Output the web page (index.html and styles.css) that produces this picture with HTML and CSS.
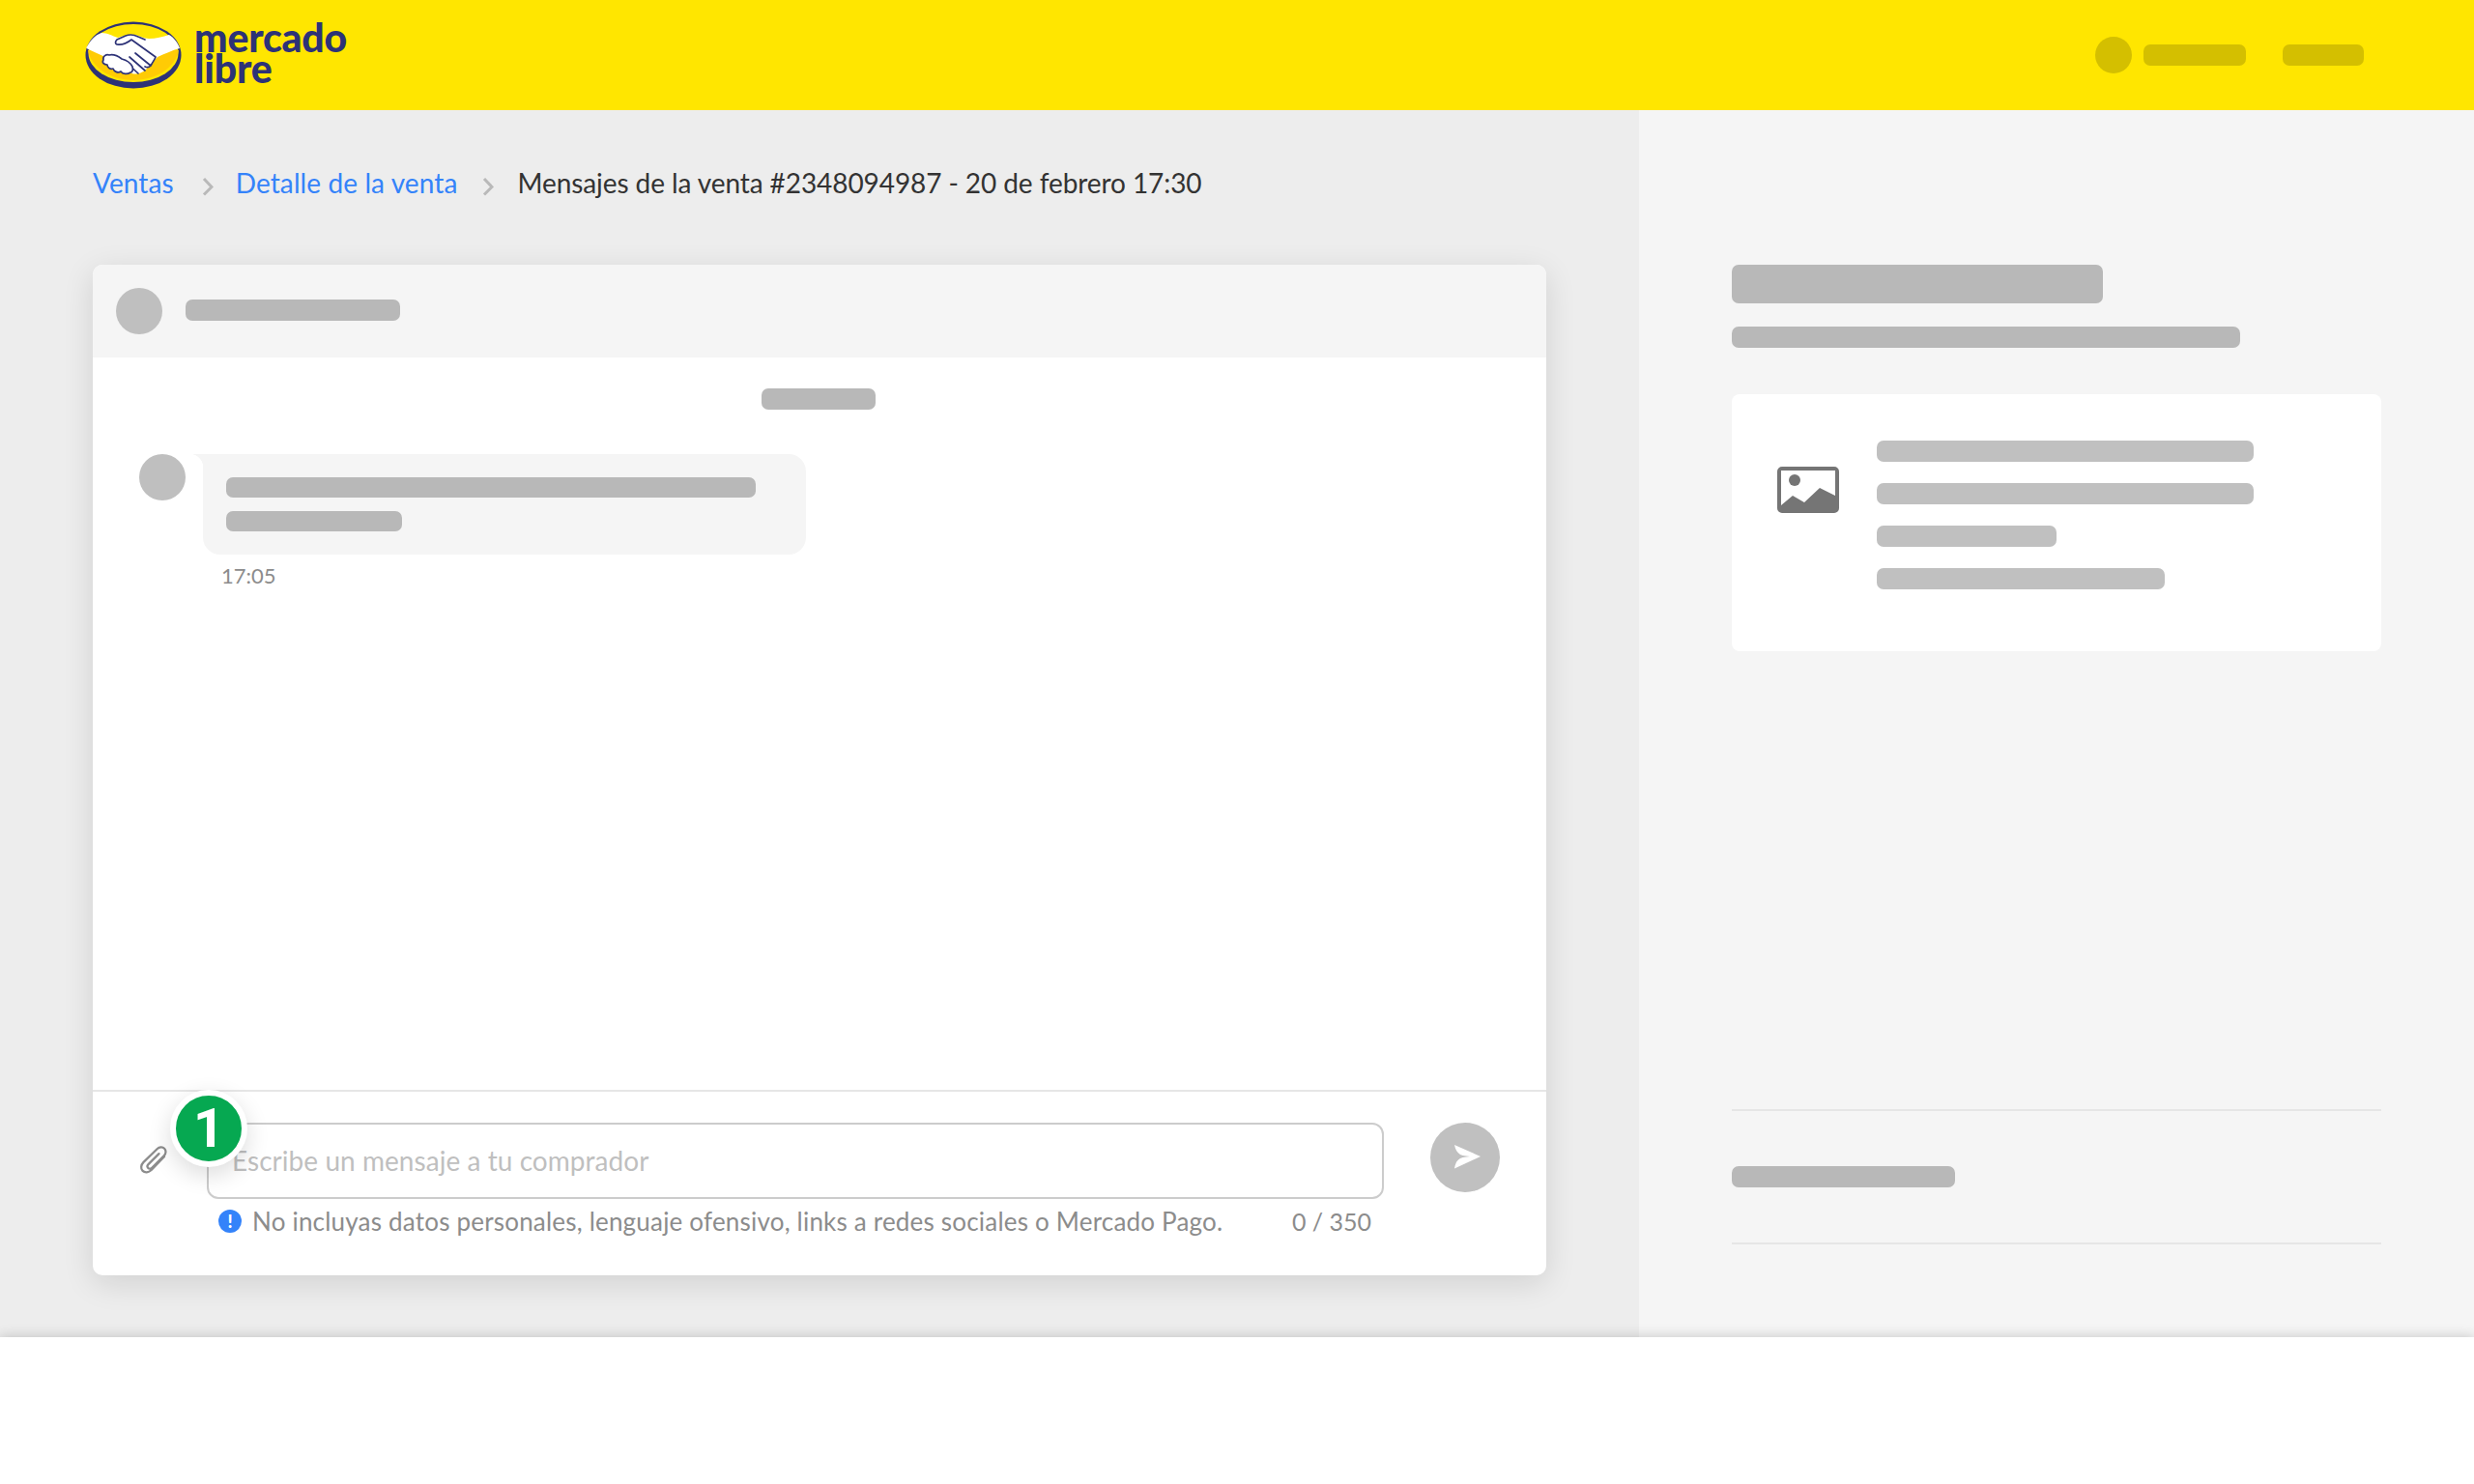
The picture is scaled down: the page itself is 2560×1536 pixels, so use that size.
FILE: index.html
```html
<!DOCTYPE html>
<html lang="es">
<head>
<meta charset="UTF-8">
<meta name="viewport" content="width=device-width, initial-scale=1.0">
<title>Mensajes de la venta</title>
<link rel="stylesheet" href="styles.css">
</head>
<body>
    <header class="topbar">
        <a class="logo">
            <svg class="logo-mark" viewBox="0 0 100 70" width="100" height="70">
                <ellipse cx="50" cy="35" rx="49.5" ry="34.500" fill="#2d3277"/>
                <ellipse cx="50" cy="33" rx="46.500" ry="30" fill="#ffe600"/>
                <path d="M3 30C6 47 26 61 50 61s44-14 47-31L60 24H30z" fill="#ffcb05"/>
                <path d="M1.500 27C6 19 11 14 17 12c6 0 11 3 17 5 6-2 12-4 17-3 6 1 10 4 15 4 7 0 15-2 21-4 5 3 9 8 11 14-8 2-16 6-23 9L62 51c-4 3-11 5-15 2-8-4-17-11-24-15-7-3-15-7-21.500-10z" fill="#fff"/>
                <path d="M33 19l9-4c5-2 9-1 13 1l7 3M33 19c-2 2-2 4 0 5 6 1 10-1 15-5l25 18M68 46L52 33M62 51L46 37M55 54L42 42M73 37c-1 3-3 5-5 9-2 2-4 2-6 1" fill="none" stroke="#2d3277" stroke-width="1.700" stroke-linecap="round" stroke-linejoin="round"/>
                <path d="M25 35c-3-1-7 1-6 5-2 3 1 5 4 5 0 3 3 5 6 4 1 3 5 5 8 3 2 3 7 3 10 1 2 0 3-3 2-6-2-4-7-7-11-8-4-3-9-5-13-4z" fill="#fff" stroke="#2d3277" stroke-width="1.700" stroke-linejoin="round"/>
            </svg>
            <span class="logo-text">mercado libre</span>
        </a>
        <div class="topbar-user">
            <span class="sk-dot"></span>
            <span class="sk-nav sk-nav-name"></span>
            <span class="sk-nav sk-nav-short"></span>
        </div>
    </header>

    <main class="layout">
        <section class="col-main">
            <nav class="breadcrumb">
                <a class="crumb-link crumb-first">Ventas</a>
                <svg class="crumb-sep" viewBox="0 0 12 20" width="12" height="20"><path d="M2 2l8 8.500-8 8" fill="none" stroke="#b9b9b9" stroke-width="3"/></svg>
                <a class="crumb-link crumb-second">Detalle de la venta</a>
                <svg class="crumb-sep" viewBox="0 0 12 20" width="12" height="20"><path d="M2 2l8 8.500-8 8" fill="none" stroke="#b9b9b9" stroke-width="3"/></svg>
                <span class="crumb-current">Mensajes de la venta #2348094987 - 20 de febrero 17:30</span>
            </nav>

            <div class="chat">
                <div class="chat-head">
                    <span class="sk-avatar"></span>
                    <span class="sk-bar sk-head-name"></span>
                </div>
                <div class="chat-body">
                    <span class="sk-bar sk-date"></span>
                    <div class="message">
                        <span class="sk-avatar"></span>
                        <div class="bubble">
                            <span class="sk-bar sk-line-long"></span>
                            <span class="sk-bar sk-line-short"></span>
                        </div>
                    </div>
                    <div class="message-time">17:05</div>
                </div>
                <div class="composer">
                    <span class="step-badge">1</span>
                    <div class="composer-row">
                        <svg class="clip-icon" viewBox="0 0 32 32" width="36" height="36">
                            <path d="M25 11.500L13 24c-2.500 2.500-6 2.800-8 .8s-1.700-5.500.8-8L18.500 4.500c1.800-1.800 4.800-2 6.500-.3s1.600 4.600-.2 6.400L13.500 22c-1 1-2.600 1.100-3.500.2s-.8-2.400.2-3.400L20 9" fill="none" stroke="#8c8c8c" stroke-width="2" stroke-linecap="round"/>
                        </svg>
                        <div class="input-box">Escribe un mensaje a tu comprador</div>
                        <button class="send-btn">
                            <svg viewBox="0 0 72 72" width="72" height="72"><path d="M25 23l27 12-27 12.500c1-5 2-8 6-10.500 3-1.500 8-2 15-2-7 0-12-.5-15-2-3-2-5-5-6-10z" fill="#fff"/></svg>
                        </button>
                    </div>
                    <div class="composer-note">
                        <span class="info-icon">!</span>
                        <span class="note-text">No incluyas datos personales, lenguaje ofensivo, links a redes sociales o Mercado Pago.</span>
                        <span class="note-count">0 / 350</span>
                    </div>
                </div>
            </div>
        </section>

        <aside class="col-side">
            <span class="sk-bar sk-title"></span>
            <span class="sk-bar sk-subtitle"></span>
            <div class="product">
                <svg class="image-icon" viewBox="0 0 64 48" width="64" height="48">
                    <path fill-rule="evenodd" d="M5 0h54a5 5 0 0 1 5 5v38a5 5 0 0 1-5 5H5a5 5 0 0 1-5-5V5a5 5 0 0 1 5-5zM4 4v36l12-10 12 7 16-15 16 8V4z" fill="#757575"/>
                    <circle cx="18" cy="14" r="6" fill="#757575"/>
                </svg>
                <div class="product-lines">
                    <span class="sk-bar sk-light sk-p1"></span>
                    <span class="sk-bar sk-light sk-p1"></span>
                    <span class="sk-bar sk-light sk-p2"></span>
                    <span class="sk-bar sk-light sk-p3"></span>
                </div>
            </div>
            <div class="side-row">
                <span class="sk-bar sk-side-row"></span>
            </div>
        </aside>
    </main>

    <footer class="bottom"></footer>
</body>
</html>
```

FILE: styles.css
```css
body {
    margin: 0;
    background-color: #fff;
    font-family: "Lato", "Liberation Sans", sans-serif;
}

/* top bar */
.topbar {
    display: flex;
    align-items: flex-start;
    height: 114px;
    padding: 0 114px 0 88px;
    background-color: #ffe600;
}
.logo {
    display: flex;
    margin-top: 22px;
}
.logo-mark {
    display: block;
}
.logo-text {
    display: block;
    width: min-content;
    margin: 1px 0 0 13px;
    font-family: "Lato", sans-serif;
    font-size: 41px;
    font-weight: 900;
    line-height: 32px;
    letter-spacing: -0.2px;
    color: #2d3277;
}
.topbar-user {
    display: flex;
    align-items: center;
    margin: 38px 0 0 auto;
}
.sk-dot {
    width: 38px;
    height: 38px;
    border-radius: 50%;
    background-color: #d4bf00;
}
.sk-nav {
    height: 22px;
    border-radius: 7px;
    background-color: #d4bf00;
}
.sk-nav-name {
    width: 106px;
    margin-left: 12px;
}
.sk-nav-short {
    width: 84px;
    margin-left: 38px;
}

/* page columns */
.layout {
    display: grid;
    grid-template-columns: 1696px 864px;
    height: 1270px;
}
.col-main {
    padding: 0 96px;
    background-color: #ededed;
}
.col-side {
    display: flex;
    flex-direction: column;
    padding: 160px 96px 0;
    background-color: #f5f5f5;
}
.bottom {
    position: relative;
    height: 152px;
    background-color: #fff;
    box-shadow: 0 -1px 12px rgba(0, 0, 0, 0.18);
}

/* breadcrumb */
.breadcrumb {
    display: flex;
    align-items: center;
    height: 40px;
    padding-top: 55px;
    font-size: 28px;
    color: #333;
}
.crumb-link {
    letter-spacing: 0.1px;
    color: #3483fa;
}
.crumb-current {
    letter-spacing: -0.08px;
}
.crumb-sep {
    flex: none;
    margin-top: 8px;
}
.crumb-first + .crumb-sep {
    margin-left: 29px;
    margin-right: 23px;
}
.crumb-second + .crumb-sep {
    margin-left: 26px;
    margin-right: 24px;
}

/* skeleton pieces */
.sk-avatar {
    flex: none;
    width: 48px;
    height: 48px;
    border-radius: 50%;
    background-color: #bfbfbf;
}
.sk-bar {
    display: block;
    height: 22px;
    border-radius: 7px;
    background-color: #b8b8b8;
}
.sk-light {
    background-color: #c0c0c0;
}

/* chat card */
.chat {
    display: flex;
    flex-direction: column;
    height: 1046px;
    margin-top: 65px;
    border-radius: 10px;
    background-color: #fff;
    box-shadow: 0 8px 32px rgba(0, 0, 0, 0.12);
}
.chat-head {
    display: flex;
    align-items: center;
    flex: none;
    height: 96px;
    padding-left: 24px;
    border-radius: 10px 10px 0 0;
    background-color: #f5f5f5;
}
.sk-head-name {
    width: 222px;
    margin: -2px 0 0 24px;
}
.chat-body {
    flex: 1;
}
.sk-date {
    width: 118px;
    margin: 32px auto 0;
    transform: translateX(-1px);
}
.message {
    display: flex;
    align-items: flex-start;
    margin-top: 46px;
    padding-left: 48px;
}
.bubble {
    position: relative;
    display: flex;
    flex-direction: column;
    gap: 14px;
    box-sizing: border-box;
    width: 624px;
    height: 104px;
    margin-left: 18px;
    padding: 24px;
    border-radius: 0 18px 18px 18px;
    background-color: #f5f5f5;
}
.bubble::before {
    content: "";
    position: absolute;
    top: 0;
    left: -14px;
    width: 14px;
    height: 14px;
    background: radial-gradient(circle at 0 100%, #fff 14px, #f5f5f5 14.5px);
}
.sk-line-long {
    width: 548px;
}
.sk-line-short {
    width: 182px;
}
.message-time {
    margin: 7px 0 0 133px;
    font-size: 22px;
    line-height: 30px;
    color: #8c8c8c;
}

/* composer */
.composer {
    position: relative;
    flex: none;
    height: 190px;
    border-top: 2px solid #e6e6e6;
}
.composer-row {
    display: flex;
    align-items: flex-start;
    padding: 32px 0 0 46px;
}
.clip-icon {
    flex: none;
    margin-top: 22px;
}
.input-box {
    flex: none;
    box-sizing: border-box;
    width: 1218px;
    height: 79px;
    margin-left: 36px;
    padding: 0 0 0 24px;
    border: 2px solid #ccc;
    border-radius: 12px;
    font-size: 28px;
    line-height: 75px;
    letter-spacing: 0.05px;
    color: #bfbfbf;
}
.send-btn {
    flex: none;
    width: 72px;
    height: 72px;
    margin-left: 48px;
    padding: 0;
    border: 0;
    border-radius: 50%;
    background-color: #c0c0c0;
}
.send-btn svg {
    display: block;
}
.composer-note {
    display: flex;
    align-items: center;
    height: 30px;
    margin: 8px 181px 0 130px;
    font-size: 26px;
    color: #8c8c8c;
}
.info-icon {
    flex: none;
    width: 24px;
    height: 24px;
    margin-right: 11px;
    border-radius: 50%;
    background-color: #3483fa;
    font-size: 18px;
    font-weight: 900;
    line-height: 24px;
    text-align: center;
    color: #fff;
}
.note-text {
    letter-spacing: 0.2px;
}
.note-count {
    margin-left: auto;
    font-size: 25px;
}
.step-badge {
    position: absolute;
    top: -2px;
    left: 80px;
    width: 68px;
    height: 68px;
    border: 6px solid #fff;
    border-radius: 50%;
    background-color: #06a851;
    box-shadow: 0 8px 24px rgba(0, 0, 0, 0.14);
    font-family: "Roboto", sans-serif;
    font-size: 56px;
    font-weight: 700;
    line-height: 68px;
    text-align: center;
    color: #fff;
    z-index: 1;
}

/* right column */
.sk-title {
    width: 384px;
    height: 40px;
}
.sk-subtitle {
    width: 526px;
    margin-top: 24px;
}
.product {
    display: flex;
    align-items: flex-start;
    box-sizing: border-box;
    height: 266px;
    margin-top: 48px;
    padding: 48px 0 0 47px;
    border-radius: 8px;
    background-color: #fff;
}
.image-icon {
    flex: none;
    margin-top: 27px;
}
.product-lines {
    display: flex;
    flex-direction: column;
    gap: 22px;
    margin-left: 39px;
}
.sk-p1 {
    width: 390px;
}
.sk-p2 {
    width: 186px;
}
.sk-p3 {
    width: 298px;
}
.side-row {
    display: flex;
    align-items: center;
    box-sizing: border-box;
    height: 140px;
    margin-top: 474px;
    border-top: 2px solid #e6e6e6;
    border-bottom: 2px solid #e6e6e6;
}
.sk-side-row {
    width: 231px;
}
```
